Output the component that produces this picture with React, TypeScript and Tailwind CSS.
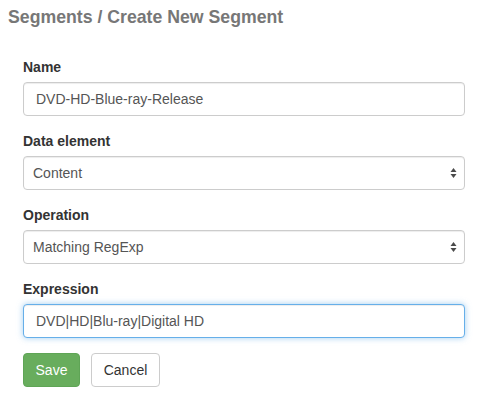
import React from "react";

const font = { fontFamily: '"Liberation Sans", Arial, sans-serif' };

function UpDown() {
  return (
    <svg
      className="pointer-events-none absolute right-[8px] top-1/2 -translate-y-1/2"
      width="7"
      height="11"
      viewBox="0 0 7 11"
      aria-hidden
    >
      <path d="M3.5 0.5 L6.5 4.5 L0.5 4.5 Z" fill="#4a4a4a" />
      <path d="M3.5 10.5 L6.5 6.5 L0.5 6.5 Z" fill="#4a4a4a" />
    </svg>
  );
}

function Field({ label, children }: { label: string; children: React.ReactNode }) {
  return (
    <div className="mb-[15px]">
      <label className="mb-[5px] block text-[14px] leading-[20px] font-bold text-[#333]">{label}</label>
      {children}
    </div>
  );
}

function Select({ value }: { value: string }) {
  return (
    <div className="relative">
      <select
        defaultValue={value}
        className="block h-[34px] w-full appearance-none rounded-[4px] border border-[#ccc] bg-white pl-[9px] pr-6 text-[14px] text-[#555] shadow-[inset_0_1px_1px_rgba(0,0,0,0.075)] outline-none"
        style={font}
      >
        <option>{value}</option>
      </select>
      <UpDown />
    </div>
  );
}

export default function App() {
  return (
    <div className="min-h-[397px] bg-white" style={font}>
      <h1 className="px-[8px] pt-[6px] text-[17.7px] leading-[22px] font-bold text-[#777]">
        Segments / Create New Segment
      </h1>
      <form className="mt-[29px] w-[442px] ml-[23px]">
        <Field label="Name">
          <input
            defaultValue="DVD-HD-Blue-ray-Release"
            className="block h-[34px] w-full rounded-[4px] border border-[#ccc] bg-white px-[12px] text-[14px] text-[#555] shadow-[inset_0_1px_1px_rgba(0,0,0,0.075)] outline-none"
            style={font}
          />
        </Field>
        <Field label="Data element">
          <Select value="Content" />
        </Field>
        <Field label="Operation">
          <Select value="Matching RegExp" />
        </Field>
        <Field label="Expression">
          <input
            defaultValue="DVD|HD|Blu-ray|Digital HD"
            className="block h-[34px] w-full rounded-[4px] border border-[#66afe9] bg-white px-[12px] text-[14px] text-[#555] shadow-[inset_0_1px_1px_rgba(0,0,0,0.075),0_0_6px_rgba(102,175,233,0.6)] outline-none"
            style={font}
          />
        </Field>
        <div className="flex gap-[11px]">
          <button
            type="button"
            className="h-[34px] w-[57px] rounded-[4px] border border-[#5fa556] bg-[#68ad5d] text-[14px] text-white"
            style={font}
          >
            Save
          </button>
          <button
            type="button"
            className="h-[34px] w-[69px] rounded-[4px] border border-[#ccc] bg-white text-[14px] text-[#333]"
            style={font}
          >
            Cancel
          </button>
        </div>
      </form>
    </div>
  );
}
